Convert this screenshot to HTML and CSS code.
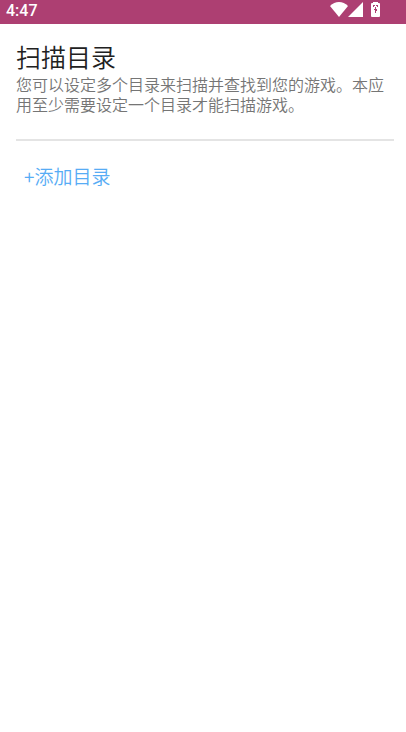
FILE: index.html
```html
<!DOCTYPE html>
<html lang="zh-CN">
<head>
<meta charset="utf-8">
<meta name="viewport" content="width=device-width, initial-scale=1">
<title>扫描目录</title>
<link rel="stylesheet" href="styles.css">
</head>
<body>
<header class="status-bar">
  <time class="clock">4:47</time>
  <div class="status-icons">
    <svg class="wifi" viewBox="0 0 18 15" aria-hidden="true"><path d="M9 15 0 4Q4 0 9 0t9 4Z"/></svg>
    <svg class="signal" viewBox="0 0 15 15" aria-hidden="true"><path d="M15 0v15H0Z"/></svg>
    <svg class="battery" viewBox="0 0 9 15" aria-hidden="true"><path fill-rule="evenodd" d="M2 0h5v1h1q1 0 1 1v12q0 1-1 1H1q-1 0-1-1V2q0-1 1-1h1ZM2 3v2h1V4h1V3ZM5 3v1h1v1h1V3ZM4 5v2H3v1h1v3h1V9h1V7H5V5Z"/></svg>
  </div>
</header>
<main class="content">
  <section class="intro">
    <h1 class="title">扫描目录</h1>
    <p class="description">您可以设定多个目录来扫描并查找到您的游戏。本应用至少需要设定一个目录才能扫描游戏。</p>
  </section>
  <button class="add-button" type="button">+添加目录</button>
</main>
</body>
</html>
```
FILE: styles.css
```css
* {
  box-sizing: border-box;
}

body {
  margin: 0;
  background: #fff;
  font-family: "Noto Sans CJK SC", sans-serif;
  font-weight: 350;
}

.status-bar {
  display: flex;
  justify-content: space-between;
  height: 24px;
  padding: 0 26px 0 6px;
  background: #ad3f72;
  color: #fff;
}

.clock {
  font-family: Roboto, sans-serif;
  font-size: 16px;
  font-weight: 500;
  line-height: 21px;
}

.status-icons {
  display: flex;
  padding-top: 2px;
  fill: #fff;
}

.wifi {
  width: 18px;
  height: 15px;
}

.signal {
  width: 15px;
  height: 15px;
}

.battery {
  width: 9px;
  height: 15px;
  margin-left: 8px;
}

.content {
  padding: 16px 12px 16px 16px;
}

.intro {
  padding-bottom: 25px;
  border-bottom: 2px solid #e4e4e4;
}

.title {
  margin: 0;
  padding-bottom: 2px;
  color: #212121;
  font-size: 25px;
  font-weight: 350;
  line-height: 32px;
}

.description {
  margin: 0;
  color: #757575;
  font-size: 16px;
  line-height: 20px;
}

.add-button {
  margin-top: 19px;
  padding: 0 8px;
  border: 0;
  background: none;
  color: #57acf5;
  font: inherit;
  font-size: 19px;
  line-height: 32px;
}
```
